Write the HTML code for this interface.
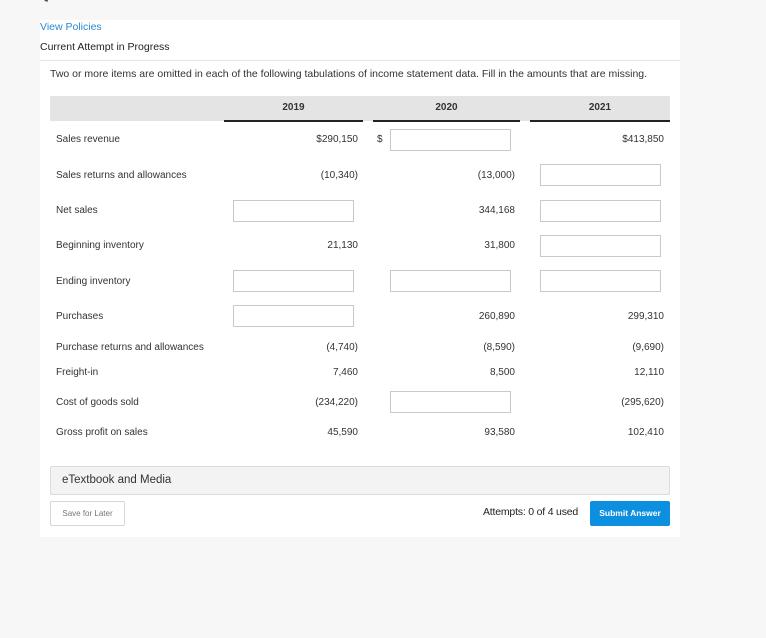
<!DOCTYPE html>
<html><head><meta charset="utf-8">
<style>
*{margin:0;padding:0;box-sizing:border-box}
body{width:766px;height:638px;background:#f7f7f7;font-family:"Liberation Sans",sans-serif;position:relative;overflow:hidden;color:#333}
.a{position:absolute;white-space:nowrap}
.panel{position:absolute;left:40px;top:20px;width:640px;height:517px;background:#fff}
.lbl{font-size:10px;color:#333}
.num{font-size:10px;color:#333;text-align:right}
.inp{position:absolute;width:121px;height:22px;border:1px solid #c9c9c9;background:#fff}
.ul{position:absolute;top:120px;height:2px;background:#222}
</style></head><body>
<div class="a" style="left:40px;top:-12px;font-size:12px;color:#444;font-weight:bold">Question 2 of 5</div>
<div class="panel"></div>
<div class="a" style="left:40px;top:21px;font-size:10.5px;color:#2a8ad6">View Policies</div>
<div class="a" style="left:40px;top:41px;font-size:10.5px;color:#222">Current Attempt in Progress</div>
<div class="a" style="left:40px;top:60px;width:640px;height:1px;background:#e6e6e6"></div>
<div class="a" style="left:50px;top:68px;font-size:10.5px;color:#333">Two or more items are omitted in each of the following tabulations of income statement data. Fill in the amounts that are missing.</div>
<div class="a" style="left:50px;top:96px;width:620px;height:25px;background:#e4e4e4"></div>
<div class="ul" style="left:224px;width:139px"></div>
<div class="ul" style="left:373px;width:147px"></div>
<div class="ul" style="left:530px;width:140px"></div>
<div class="a" style="left:224px;width:139px;top:102px;text-align:center;font-size:10px;font-weight:bold">2019</div>
<div class="a" style="left:373px;width:147px;top:102px;text-align:center;font-size:10px;font-weight:bold">2020</div>
<div class="a" style="left:530px;width:140px;top:102px;text-align:center;font-size:10px;font-weight:bold">2021</div>

<div class="a lbl" style="left:56px;top:134px">Sales revenue</div>
<div class="a num" style="left:258px;width:100px;top:134px">$290,150</div>
<div class="a num" style="left:377px;top:134px">$</div>
<div class="inp" style="left:390px;top:129px"></div>
<div class="a num" style="left:564px;width:100px;top:134px">$413,850</div>

<div class="a lbl" style="left:56px;top:170px">Sales returns and allowances</div>
<div class="a num" style="left:258px;width:100px;top:170px">(10,340)</div>
<div class="a num" style="left:415px;width:100px;top:170px">(13,000)</div>
<div class="inp" style="left:540px;top:164px"></div>

<div class="a lbl" style="left:56px;top:205px">Net sales</div>
<div class="inp" style="left:233px;top:200px"></div>
<div class="a num" style="left:415px;width:100px;top:205px">344,168</div>
<div class="inp" style="left:540px;top:200px"></div>

<div class="a lbl" style="left:56px;top:240px">Beginning inventory</div>
<div class="a num" style="left:258px;width:100px;top:240px">21,130</div>
<div class="a num" style="left:415px;width:100px;top:240px">31,800</div>
<div class="inp" style="left:540px;top:235px"></div>

<div class="a lbl" style="left:56px;top:276px">Ending inventory</div>
<div class="inp" style="left:233px;top:270px"></div>
<div class="inp" style="left:390px;top:270px"></div>
<div class="inp" style="left:540px;top:270px"></div>

<div class="a lbl" style="left:56px;top:311px">Purchases</div>
<div class="inp" style="left:233px;top:305px"></div>
<div class="a num" style="left:415px;width:100px;top:311px">260,890</div>
<div class="a num" style="left:564px;width:100px;top:311px">299,310</div>

<div class="a lbl" style="left:56px;top:342px">Purchase returns and allowances</div>
<div class="a num" style="left:258px;width:100px;top:342px">(4,740)</div>
<div class="a num" style="left:415px;width:100px;top:342px">(8,590)</div>
<div class="a num" style="left:564px;width:100px;top:342px">(9,690)</div>

<div class="a lbl" style="left:56px;top:367px">Freight-in</div>
<div class="a num" style="left:258px;width:100px;top:367px">7,460</div>
<div class="a num" style="left:415px;width:100px;top:367px">8,500</div>
<div class="a num" style="left:564px;width:100px;top:367px">12,110</div>

<div class="a lbl" style="left:56px;top:397px">Cost of goods sold</div>
<div class="a num" style="left:258px;width:100px;top:397px">(234,220)</div>
<div class="inp" style="left:390px;top:391px"></div>
<div class="a num" style="left:564px;width:100px;top:397px">(295,620)</div>

<div class="a lbl" style="left:56px;top:427px">Gross profit on sales</div>
<div class="a num" style="left:258px;width:100px;top:427px">45,590</div>
<div class="a num" style="left:415px;width:100px;top:427px">93,580</div>
<div class="a num" style="left:564px;width:100px;top:427px">102,410</div>

<div class="a" style="left:50px;top:466px;width:620px;height:29px;background:#f3f3f3;border:1px solid #dcdcdc;border-radius:2px"></div>
<div class="a" style="left:62px;top:474px;font-size:11.5px;color:#333">eTextbook and Media</div>

<div class="a" style="left:50px;top:501px;width:75px;height:25px;border:1px solid #d6d6d6;border-radius:2px;background:#fff;font-size:8px;color:#777;text-align:center;line-height:23px">Save for Later</div>
<div class="a" style="left:483px;top:506px;font-size:10.5px;color:#222;letter-spacing:-0.2px">Attempts: 0 of 4 used</div>
<div class="a" style="left:590px;top:501px;width:80px;height:25px;background:#0d8fe0;border-radius:2px;color:#fff;font-size:8.5px;font-weight:bold;text-align:center;line-height:25px">Submit Answer</div>
</body></html>
